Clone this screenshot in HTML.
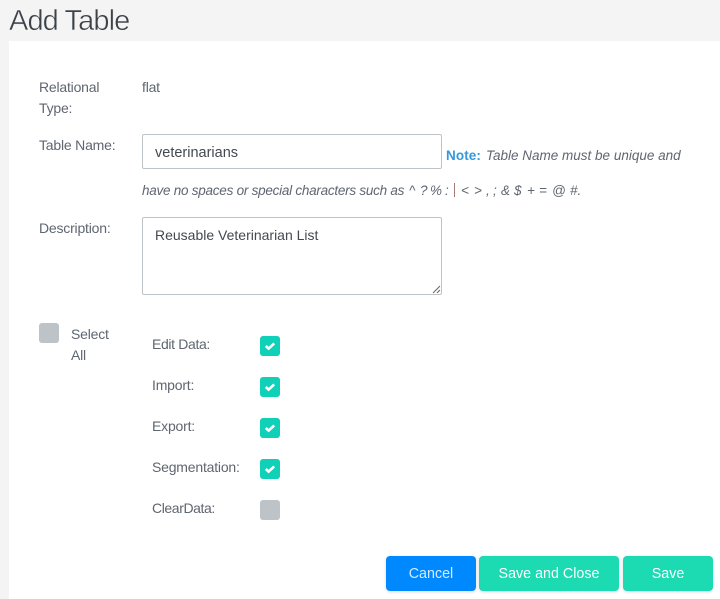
<!DOCTYPE html>
<html><head><meta charset="utf-8">
<style>
html,body{margin:0;padding:0}
body{width:720px;height:599px;overflow:hidden;background:#f4f4f4;position:relative;font-family:"Liberation Sans",sans-serif;color:#5f6670}
.panel{position:absolute;left:9px;top:41px;width:711px;height:558px;background:#fff}
.t{position:absolute;white-space:nowrap;font-size:14px;line-height:20px;letter-spacing:-.2px}
.n{position:absolute;white-space:nowrap;font-size:13.5px;line-height:20px;font-style:italic;top:181px}
.box{position:absolute;background:#fff;border:1px solid #bdc3c7;border-radius:2px;box-sizing:border-box}
.cb{position:absolute;width:20px;height:20px;border-radius:3px;background:#bdc3c7}
.cb.on{background:#10d0b8}
.cb svg{position:absolute;left:0;top:0}
.btn{position:absolute;top:556px;height:35px;border-radius:4px;color:#fff;font-size:14.3px;line-height:37px;text-align:center;background:#1cdab2;box-shadow:0 1px 3px rgba(0,0,0,.15)}
</style></head>
<body>
<div class="t" style="left:9px;top:2px;font-size:29px;line-height:38px;color:#3c4248;letter-spacing:-.9px;-webkit-text-stroke:.5px #f4f4f4">Add Table</div>
<div class="panel"></div>

<div class="t" style="left:39px;top:77px">Relational</div>
<div class="t" style="left:39px;top:98px">Type:</div>
<div class="t" style="left:142px;top:77px">flat</div>

<div class="t" style="left:39px;top:135px">Table Name:</div>
<div class="box" style="left:142px;top:134px;width:300px;height:35px"></div>
<div class="t" style="left:155px;top:143px;font-size:14.5px;color:#44494f;letter-spacing:0">veterinarians</div>
<div class="t" style="left:446px;top:146px;font-size:13.5px;font-weight:bold;color:#3498db;letter-spacing:.1px">Note:</div>
<div class="n" style="left:486px;top:146px">Table Name must be unique and</div>
<div class="n" style="left:142px;letter-spacing:-.25px">have no spaces or special characters such as</div>
<div class="n" style="left:409px">^</div>
<div class="n" style="left:420px">?</div>
<div class="n" style="left:430px">%</div>
<div class="n" style="left:445px">:</div>
<div style="position:absolute;left:454px;top:183px;width:1px;height:14px;background:#a87878"></div>
<div class="n" style="left:461px">&lt;</div>
<div class="n" style="left:474px">&gt;</div>
<div class="n" style="left:486px">,</div>
<div class="n" style="left:493px">;</div>
<div class="n" style="left:501px">&amp;</div>
<div class="n" style="left:514px">$</div>
<div class="n" style="left:527px">+</div>
<div class="n" style="left:539px">=</div>
<div class="n" style="left:552px">@</div>
<div class="n" style="left:570px">#.</div>

<div class="t" style="left:39px;top:218px">Description:</div>
<div class="box" style="left:142px;top:217px;width:300px;height:78px"></div>
<div class="t" style="left:155px;top:225px;color:#44494f;letter-spacing:0">Reusable Veterinarian List</div>
<svg style="position:absolute;left:432px;top:285px" width="9" height="9"><path d="M1 8L8 1M5 8L8 5" stroke="#666" stroke-width="1" fill="none"/></svg>

<div class="cb" style="left:39px;top:323px"></div>
<div class="t" style="left:71px;top:324px">Select</div>
<div class="t" style="left:71px;top:345px">All</div>

<div class="t" style="left:152px;top:334px;letter-spacing:-.35px">Edit Data:</div>
<div class="cb on" style="left:260px;top:336px"><svg width="20" height="20"><path d="M5.8 10L8.6 12.6L14.2 7.4" stroke="#fff" stroke-width="2.6" fill="none"/></svg></div>
<div class="t" style="left:152px;top:375px">Import:</div>
<div class="cb on" style="left:260px;top:377px"><svg width="20" height="20"><path d="M5.8 10L8.6 12.6L14.2 7.4" stroke="#fff" stroke-width="2.6" fill="none"/></svg></div>
<div class="t" style="left:152px;top:416px">Export:</div>
<div class="cb on" style="left:260px;top:418px"><svg width="20" height="20"><path d="M5.8 10L8.6 12.6L14.2 7.4" stroke="#fff" stroke-width="2.6" fill="none"/></svg></div>
<div class="t" style="left:152px;top:457px">Segmentation:</div>
<div class="cb on" style="left:260px;top:459px"><svg width="20" height="20"><path d="M5.8 10L8.6 12.6L14.2 7.4" stroke="#fff" stroke-width="2.6" fill="none"/></svg></div>
<div class="t" style="left:152px;top:498px;letter-spacing:-.4px">ClearData:</div>
<div class="cb" style="left:260px;top:500px"></div>

<div class="btn" style="left:386px;width:90px;background:#0088ff;color:#d5ebff">Cancel</div>
<div class="btn" style="left:479px;width:140px">Save and Close</div>
<div class="btn" style="left:623px;width:90px">Save</div>
</body></html>
